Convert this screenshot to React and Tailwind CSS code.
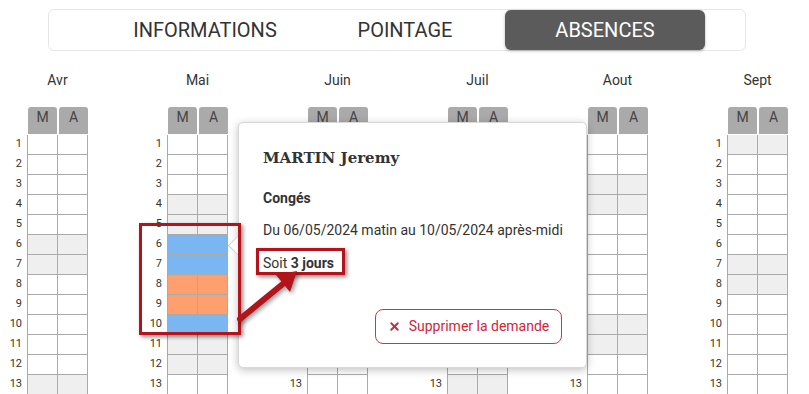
import { X } from "lucide-react";

const MONTHS = [
  { label: "Avr", month: 3 },
  { label: "Mai", month: 4 },
  { label: "Juin", month: 5 },
  { label: "Juil", month: 6 },
  { label: "Aout", month: 7 },
  { label: "Sept", month: 8 },
];

// absences de mai (jour -> type)
const ABSENCES = { 6: "conge", 7: "conge", 8: "ferie", 9: "ferie", 10: "conge" };

const DAYS = Array.from({ length: 13 }, (_, i) => i + 1);

function DayRow({ month, day }) {
  const dow = new Date(2024, month, day).getDay();
  const weekend = dow === 0 || dow === 6;
  const abs = month === 4 ? ABSENCES[day] : null;
  let bg = "bg-white";
  if (abs === "conge") bg = "bg-[#7ab6f2]";
  else if (abs === "ferie") bg = "bg-[#fd9f6f]";
  else if (weekend) bg = "bg-[#efefef]";

  return (
    <div className="flex h-[20px]">
      <div className="w-[27px] pr-[5px] text-right text-[11px] leading-[17px] text-[#333]">
        {day}
      </div>
      <div className={`w-[30px] border-l border-b border-[#aaa] ${bg}`} />
      <div className={`w-[31px] border-l border-r border-b border-[#aaa] ${bg}`} />
    </div>
  );
}

function MonthColumn({ label, month }) {
  return (
    <div className="w-[140px] shrink-0">
      <div className="w-[88px] pl-[27px] text-center text-[14px] leading-[20px] text-[#333]">
        {label}
      </div>
      <div className="mt-[17px] flex gap-[2px] pl-[28px]">
        <div className="h-[27px] w-[29px] rounded-t-[3px] bg-[#aaa] text-center text-[14px] leading-[20px] text-[#444]">
          M
        </div>
        <div className="h-[27px] w-[29px] rounded-t-[3px] bg-[#aaa] text-center text-[14px] leading-[20px] text-[#444]">
          A
        </div>
      </div>
      <div className="mt-[1px]">
        {DAYS.map((d) => (
          <DayRow key={d} month={month} day={d} />
        ))}
      </div>
    </div>
  );
}

export default function App() {
  const tabs = ["INFORMATIONS", "POINTAGE", "ABSENCES"];

  return (
    <div className="relative h-[394px] w-[809px] overflow-hidden bg-white font-['Roboto',sans-serif]">
      {/* TABS */}
      <div className="ml-[48px] mt-[9px] flex h-[42px] w-[698px] items-center rounded-[6px] border border-[#e6e6e6] pl-[56px]">
        {tabs.map((t) => (
          <div
            key={t}
            className={
              t === "ABSENCES"
                ? "flex h-[40px] w-[200px] items-center justify-center rounded-[6px] bg-[#5b5b5b] text-[20px] text-white shadow-[0_1px_3px_rgba(0,0,0,0.3)]"
                : "flex h-[40px] w-[200px] items-center justify-center text-[20px] text-[#333]"
            }
          >
            {t}
          </div>
        ))}
      </div>

      {/* CALENDAR */}
      <div className="mt-[19px] flex">
        {MONTHS.map((m) => (
          <MonthColumn key={m.label} label={m.label} month={m.month} />
        ))}
      </div>

      {/* POPOVER */}
      <div className="absolute left-[238px] top-[122px] h-[246px] w-[349px] rounded-[5px] border border-[#d8d8d8] bg-white pl-[24px] pr-[24px] pt-[25px] shadow-[0_2px_8px_rgba(0,0,0,0.25)]">
        <div className="absolute left-[-8px] top-[115px] h-[15px] w-[15px] rotate-45 border-b border-l border-[#cfcfcf] bg-white" />
        <div className="font-['DejaVu_Serif',serif] text-[15px] font-bold leading-[20px] text-[#333]">
          MARTIN Jeremy
        </div>
        <div className="mt-[20px] text-[14px] font-bold leading-[20px] text-[#333]">Congés</div>
        <div className="mt-[12px] whitespace-nowrap text-[14px] leading-[20px] text-[#333]">
          Du 06/05/2024 matin au 10/05/2024 après-midi
        </div>
        <div className="mt-[13px] whitespace-nowrap text-[14px] leading-[20px] text-[#333]">
          Soit <span className="font-bold">3 jours</span>
        </div>
        <div className="mt-[36px] flex justify-end">
          <button className="flex h-[35px] w-[187px] items-center justify-center gap-[8px] rounded-[8px] border border-[#d3343c] text-[14px] text-[#d0263b]">
            <X size={13} strokeWidth={3.5} />
            Supprimer la demande
          </button>
        </div>
      </div>

      {/* ANNOTATIONS */}
      <div className="absolute left-[139px] top-[223px] h-[112px] w-[102px] border-[3px] border-[#b3141b] shadow-[2px_2px_4px_rgba(0,0,0,0.45)]" />
      <div className="absolute left-[256px] top-[248px] h-[27px] w-[89px] border-[3px] border-[#b3141b] shadow-[2px_2px_4px_rgba(0,0,0,0.45)]" />
      <svg
        className="absolute left-0 top-0 drop-shadow-[2px_2px_2px_rgba(0,0,0,0.4)]"
        width="809"
        height="394"
        viewBox="0 0 809 394"
      >
        <line x1="240" y1="319" x2="284" y2="283" stroke="#b3141b" strokeWidth="6" strokeLinecap="round" />
        <polygon points="297,271 276,275 290,292" fill="#b3141b" />
      </svg>
    </div>
  );
}
